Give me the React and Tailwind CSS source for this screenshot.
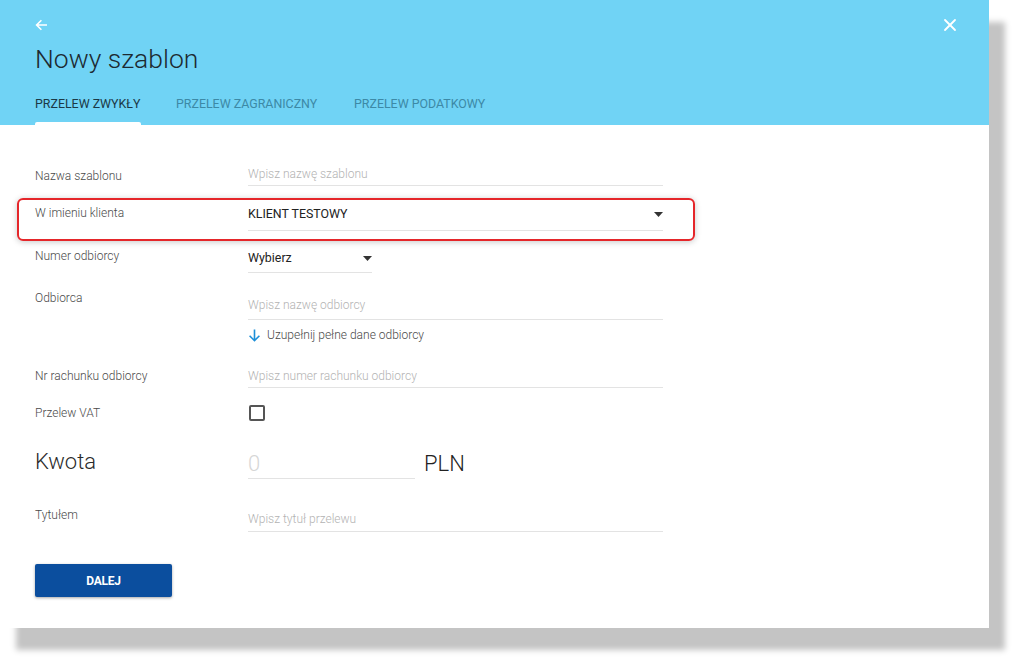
import { X } from 'lucide-react'

const font = { fontFamily: 'Roboto, "Liberation Sans", sans-serif' }

function Caret() {
  return (
    <svg width="9" height="5" viewBox="0 0 9 5" className="shrink-0">
      <path d="M0 0h9L4.5 5z" fill="#333" />
    </svg>
  )
}

function Label({ children, mt = 'mt-0' }) {
  return <div className={`w-[213px] shrink-0 text-[12px] leading-[16px] text-[#4a4a4a] font-light ${mt}`}>{children}</div>
}

export default function App() {
  return (
    <div className="min-h-screen bg-white" style={font}>
      <div className="w-[989px] h-[628px] bg-white shadow-[16px_22px_6px_#c4c4c4] flex flex-col">
        {/* Header */}
        <div className="h-[125px] bg-[#70d3f5] flex flex-col pl-[35px] shrink-0">
          <div className="flex justify-between items-center mt-[18px] pr-[29px] h-[14px]">
            <svg width="13" height="12" viewBox="0 0 13 12">
              <path d="M12 6H1.8M6.4 1.2L1.6 6l4.8 4.8" stroke="#fff" strokeWidth="1.6" fill="none" />
            </svg>
            <X size={20} color="#fff" strokeWidth={2.2} />
          </div>
          <div className="mt-[11px] h-[32px] leading-[32px] text-[26.5px] font-light text-[#1d2a31]">Nowy szablon</div>
          <div className="flex mt-[21px] text-[12.4px] leading-[16px] uppercase">
            <div className="w-[141px] flex flex-col">
              <span className="text-[#1b3946]">Przelew zwykły</span>
              <div className="mt-[10px] w-[106px] h-[3px] bg-white rounded-t-[2px]" />
            </div>
            <div className="w-[178px] text-[#3d89a6]">Przelew zagraniczny</div>
            <div className="text-[#3d89a6]">Przelew podatkowy</div>
          </div>
        </div>

        {/* Form */}
        <div className="flex flex-col">
          <div className="flex pl-[35px] mt-[37px]">
            <Label mt="mt-[6px]">Nazwa szablonu</Label>
            <div className="w-[415px] h-[24px] border-b border-[#e3e3e3] flex items-center text-[12px] text-[#b3b3b3] font-light">Wpisz nazwę szablonu</div>
          </div>

          <div className="ml-[17px] mt-[12px] w-[678px] border-2 border-[#e5262a] rounded-[6px] shadow-[0_1px_6px_rgba(0,0,0,0.22)] pl-[16px] pt-[3px] pb-[8px] flex">
            <Label mt="mt-[2px]">W imieniu klienta</Label>
            <div className="w-[415px] h-[28px] border-b border-[#e3e3e3] flex items-center justify-between pb-[4px] text-[12.4px] text-[#222]">
              <span>KLIENT TESTOWY</span>
              <Caret />
            </div>
          </div>

          <div className="flex pl-[35px] mt-[4px]">
            <Label mt="mt-[3px]">Numer odbiorcy</Label>
            <div className="w-[124px] h-[28px] border-b border-[#e3e3e3] flex items-center justify-between text-[12.4px] text-[#222]">
              <span>Wybierz</span>
              <Caret />
            </div>
          </div>

          <div className="flex pl-[35px] mt-[17px]">
            <Label>Odbiorca</Label>
            <div className="w-[415px] h-[30px] border-b border-[#e3e3e3] flex items-center text-[12px] text-[#b3b3b3] font-light">Wpisz nazwę odbiorcy</div>
          </div>

          <div className="flex pl-[248px] mt-[7px] h-[16px] items-center gap-[6px] text-[12px] text-[#4a4a4a] font-light">
            <svg width="13" height="13" viewBox="0 0 13 13">
              <path d="M6.5 0.5v11M1.6 6.8l4.9 4.9 4.9-4.9" stroke="#1c8fd8" strokeWidth="1.6" fill="none" />
            </svg>
            <span>Uzupełnij pełne dane odbiorcy</span>
          </div>

          <div className="flex pl-[35px] mt-[21px]">
            <Label mt="mt-[4px]">Nr rachunku odbiorcy</Label>
            <div className="w-[415px] h-[24px] border-b border-[#e3e3e3] flex items-center text-[12px] text-[#b3b3b3] font-light">Wpisz numer rachunku odbiorcy</div>
          </div>

          <div className="flex pl-[35px] mt-[16px] h-[18px]">
            <Label mt="mt-[1px]">Przelew VAT</Label>
            <div className="ml-[1px] mt-[1px] w-[16px] h-[16px] border-2 border-[#555] rounded-[2px]" />
          </div>

          <div className="flex pl-[35px] mt-[26px] items-start">
            <div className="w-[213px] shrink-0 text-[22px] leading-[28px] font-light text-[#2b2b2b]">Kwota</div>
            <div className="w-[167px] h-[31px] border-b border-[#e3e3e3] flex items-center text-[22px] font-light text-[#d6d6d6]">0</div>
            <div className="ml-[9px] h-[31px] flex items-center text-[22px] font-light text-[#222]">PLN</div>
          </div>

          <div className="flex pl-[35px] mt-[27px]">
            <Label mt="mt-[1px]">Tytułem</Label>
            <div className="w-[415px] h-[26px] border-b border-[#e3e3e3] flex items-center text-[12px] text-[#b3b3b3] font-light">Wpisz tytuł przelewu</div>
          </div>

          <div className="pl-[35px] mt-[32px]">
            <button className="w-[137px] h-[33px] bg-[#0b4e9e] rounded-[2px] shadow-[0_1px_3px_rgba(0,0,0,0.35)] text-white text-[12px] font-bold tracking-[-0.2px]">DALEJ</button>
          </div>
        </div>
      </div>
    </div>
  )
}
